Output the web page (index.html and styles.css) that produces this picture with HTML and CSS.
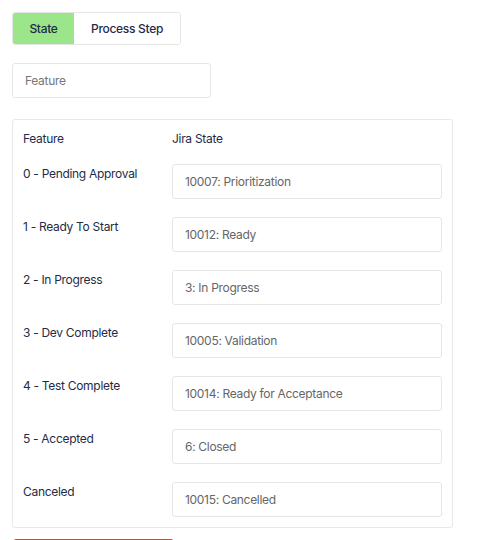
FILE: index.html
```html
<!DOCTYPE html>
<html>
<head>
<meta charset="utf-8">
<link rel="stylesheet" href="styles.css">
</head>
<body>
<div class="page">
  <div class="tabs">
    <button class="tab tab-active">State</button>
    <button class="tab">Process Step</button>
  </div>
  <input class="filter" type="text" placeholder="Feature">
  <div class="card">
    <div class="grid">
      <div class="head">Feature</div>
      <div class="head">Jira State</div>

      <div class="label">0 - Pending Approval</div>
      <div class="field">10007: Prioritization</div>

      <div class="label">1 - Ready To Start</div>
      <div class="field">10012: Ready</div>

      <div class="label">2 - In Progress</div>
      <div class="field">3: In Progress</div>

      <div class="label">3 - Dev Complete</div>
      <div class="field">10005: Validation</div>

      <div class="label">4 - Test Complete</div>
      <div class="field">10014: Ready for Acceptance</div>

      <div class="label">5 - Accepted</div>
      <div class="field">6: Closed</div>

      <div class="label">Canceled</div>
      <div class="field">10015: Cancelled</div>
    </div>
  </div>
  <button class="danger" aria-label="Delete"></button>
</div>
</body>
</html>
```
FILE: styles.css
```css
html, body {
  margin: 0;
  padding: 0;
  background: #fff;
  overflow: hidden;
}
body {
  font-family: Inter, "Noto Sans", sans-serif;
  font-size: 12px;
  letter-spacing: -0.3px;
  color: #1f2b47;
}
.page {
  padding: 12px;
  display: flex;
  flex-direction: column;
  align-items: flex-start;
}
.tabs {
  display: flex;
  border: 1px solid #e6e6e6;
  border-radius: 3px;
  overflow: hidden;
  height: 33px;
  box-sizing: border-box;
}
.tab {
  font-family: inherit;
  font-size: 12px;
  letter-spacing: -0.3px;
  font-weight: 500;
  color: #1f2b47;
  background: #fff;
  border: 0;
  padding: 0 17px;
  height: 100%;
  margin: 0;
}
.tab-active {
  background: #9be58a;
  width: 61px;
  padding: 0;
}
.filter {
  margin-top: 18px;
  width: 199px;
  height: 35px;
  box-sizing: border-box;
  border: 1px solid #e6e6e6;
  border-radius: 3px;
  padding: 0 12px;
  font-family: inherit;
  font-size: 12px;
  letter-spacing: -0.3px;
  color: #333;
  outline: none;
}
.filter::placeholder {
  color: #777;
}
.card {
  margin-top: 21px;
  width: 441px;
  box-sizing: border-box;
  border: 1px solid #e8e8e8;
  border-radius: 3px;
  padding: 10px;
}
.grid {
  display: grid;
  grid-template-columns: 149px 1fr;
  row-gap: 18px;
  align-items: start;
}
.head {
  line-height: 18px;
  margin-bottom: -2px;
}
.label {
  line-height: 18px;
  padding-top: 1px;
}
.field {
  height: 35px;
  box-sizing: border-box;
  border: 1px solid #e6e6e6;
  border-radius: 3px;
  padding: 0 12px;
  display: flex;
  align-items: center;
  color: #666;
}
.danger {
  margin-top: 11px;
  margin-left: 1px;
  width: 161px;
  height: 34px;
  background: #e5534b;
  border: 1px solid #d9443c;
  border-radius: 3px;
}
```
